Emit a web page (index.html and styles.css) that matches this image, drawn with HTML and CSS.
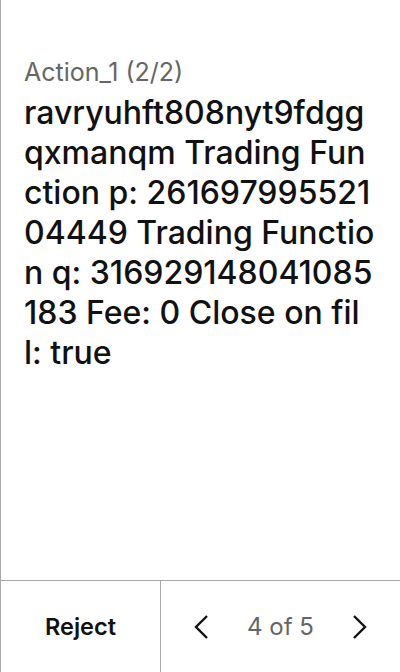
FILE: index.html
```html
<!DOCTYPE html>
<html>
<head>
<meta charset="utf-8">
<link rel="stylesheet" href="styles.css">
</head>
<body>
<div class="screen">
  <div class="content">
    <div class="title">Action_1 (2/2)</div>
    <div class="body">ravryuhft808nyt9fdggqxmanqm Trading Function p: 26169799552104449 Trading Function q: 316929148041085183 Fee: 0 Close on fill: true</div>
  </div>
  <div class="bar">
    <div class="reject">Reject</div>
    <div class="pager">
      <svg class="chev" width="20" height="28" viewBox="0 0 20 28"><path d="M16 3 L5 14 L16 25" fill="none" stroke="#111" stroke-width="2.4"/></svg>
      <span class="count">4 of 5</span>
      <svg class="chev" width="20" height="28" viewBox="0 0 20 28"><path d="M4 3 L15 14 L4 25" fill="none" stroke="#111" stroke-width="2.4"/></svg>
    </div>
  </div>
</div>
</body>
</html>
```
FILE: styles.css
```css
html, body { margin: 0; padding: 0; background: #fff; }
body { font-family: Inter, "Noto Sans", sans-serif; }
.screen {
  width: 400px; height: 672px; box-sizing: border-box;
  border-left: 1px solid #a8a8a8;
  display: flex; flex-direction: column;
}
.content { flex: 1; padding: 54px 25.5px 0 23px; }
.title { font-size: 25px; color: #666; line-height: 36px; }
.body {
  font-size: 32px; line-height: 40px; color: #111; font-weight: 500;
  word-break: break-all; margin-top: 3px;
}
.bar {
  height: 92px; border-top: 1px solid #a8a8a8; box-sizing: border-box;
  display: flex;
}
.reject {
  width: 159px; border-right: 1px solid #a8a8a8;
  display: flex; align-items: center; justify-content: center;
  font-size: 23.5px; font-weight: 600; color: #111;
}
.pager {
  flex: 1; display: flex; align-items: center; justify-content: space-between;
  padding: 0 30px 0 30px;
}
.count { font-size: 24px; color: #666; }
.chev { display: block; }
```
